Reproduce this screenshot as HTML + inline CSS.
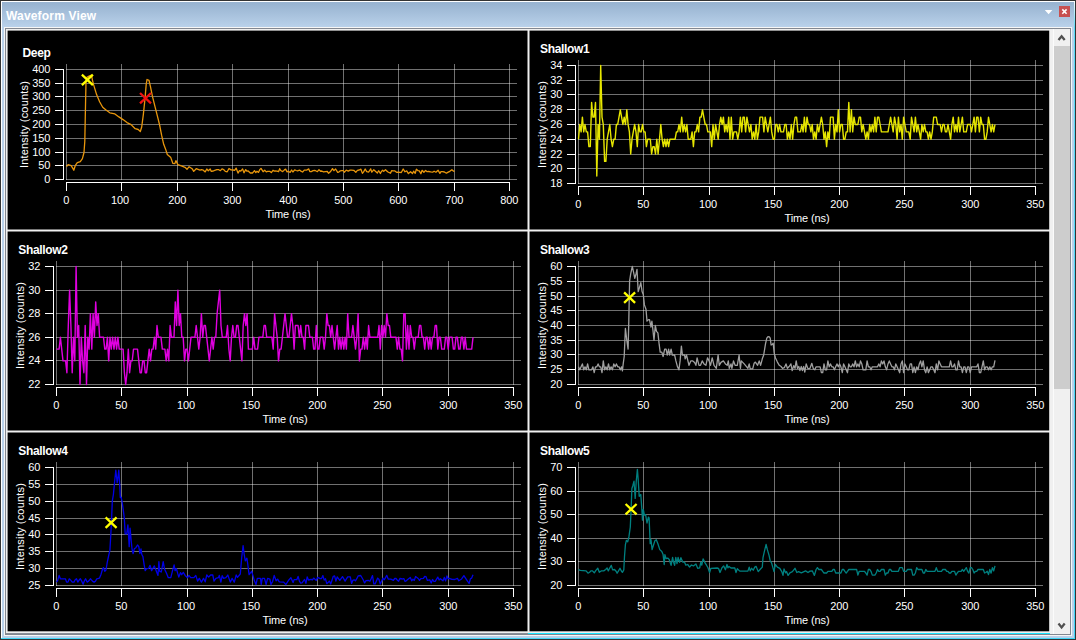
<!DOCTYPE html>
<html><head><meta charset="utf-8"><title>Waveform View</title>
<style>
html,body{margin:0;padding:0;}
body{width:1076px;height:640px;overflow:hidden;position:relative;background:#333;font-family:"Liberation Sans",sans-serif;}
.abs{position:absolute;}
#win{left:1px;top:1px;width:1074px;height:638px;background:linear-gradient(#99b4d1 0px,#99b4d1 3px,#b9d1ea 26px,#b9d1ea 100%);}
#hl-top{left:1px;top:1px;width:1074px;height:1px;background:#fff;}
#hl-left{left:1px;top:1px;width:1px;height:638px;background:#fff;}
#cy-right{left:1074px;top:2px;width:1px;height:637px;background:linear-gradient(#f4fbff 0px,#5adcf6 26px,#3fd6f7 100%);}
#cy-bot{left:1px;top:638px;width:1074px;height:1px;background:#3fd6f7;}
#title{left:6px;top:9px;color:#fff;font-weight:bold;font-size:12px;line-height:14px;letter-spacing:0.18px;white-space:nowrap;}
#dd{left:1045px;top:10px;width:0;height:0;border-left:3.6px solid transparent;border-right:3.6px solid transparent;border-top:4.4px solid #fff;}
#close{left:1059px;top:6px;width:11px;height:11px;background:#c75050;}
#frame-w{left:4px;top:27px;width:1068px;height:609px;background:#f6f6f6;}
#wl{left:1053px;top:29px;width:1px;height:605px;background:#fbfbfb;}
#frame-g{left:5px;top:28px;width:1066px;height:607px;background:#828790;}
#frame-in{left:6px;top:29px;width:1064px;height:605px;background:#f0f0f0;}
#cy-in{left:528px;top:633px;width:522px;height:1px;background:#19e6ff;}
#gr-in{left:6px;top:633px;width:522px;height:1px;background:#8a8f98;}
#sb{left:1054px;top:29px;width:16px;height:605px;background:#f0f0f0;}
#thumb{left:1054px;top:46px;width:16px;height:343px;background:#cdcdcd;}
.panel{background:#000;border:1px solid #e3e3e3;box-sizing:border-box;}
.panel-svg{position:absolute;overflow:hidden;}
text{font-family:"Liberation Sans",sans-serif;fill:#fff;}
.ttl{font-weight:bold;font-size:12px;letter-spacing:-0.35px;}
.tk{font-size:11px;letter-spacing:-0.1px;}
</style></head><body>
<div id="win" class="abs"></div>
<div id="hl-top" class="abs"></div><div id="hl-left" class="abs"></div>
<div id="cy-right" class="abs"></div><div id="cy-bot" class="abs"></div>
<div id="title" class="abs">Waveform View</div>
<svg class="abs" style="left:1040px;top:5px" width="16" height="14" viewBox="1040 5 16 14"><path d="M1044.8 9.9H1052.4L1048.6 14.3Z" fill="#fff"/></svg>
<div id="close" class="abs"><svg width="11" height="11" viewBox="0 0 11 11" style="display:block"><path d="M3.3 3.4L7.6 7.7M7.6 3.4L3.3 7.7" stroke="#fff" stroke-width="1.6" fill="none"/></svg></div>
<div id="frame-w" class="abs"></div><div id="frame-g" class="abs"></div><div id="frame-in" class="abs"></div>
<div id="gr-in" class="abs"></div><div id="cy-in" class="abs"></div>
<div id="sb" class="abs"></div><div id="wl" class="abs"></div><div id="thumb" class="abs"></div>
<svg class="abs" style="left:1054px;top:29px" width="16" height="605" viewBox="0 0 16 605"><path d="M4.5 11L7.6 7.2L10.7 11M4.5 594.6L7.6 598.4L10.7 594.6" stroke="#505050" stroke-width="2.3" fill="none"/></svg>
<svg class="abs" style="left:0;top:0" width="1076" height="640" viewBox="0 0 1076 640">
<g fill="#000">
<rect x="7.6" y="30.6" width="519.9" height="198.9"/><rect x="529.5" y="30.6" width="519.7" height="198.9"/>
<rect x="7.6" y="231.5" width="519.9" height="199"/><rect x="529.5" y="231.5" width="519.7" height="199"/>
<rect x="7.6" y="432.5" width="519.9" height="198.8"/><rect x="529.5" y="432.5" width="519.7" height="198.8"/>
</g></svg>
<svg class="panel-svg" style="left:7px;top:30px" width="521" height="201" viewBox="7 30 521 201">
<path d="M66.5 64V180M121.5 64V180M177.5 64V180M232.5 64V180M288.5 64V180M343.5 64V180M398.5 64V180M454.5 64V180M509.5 64V180" stroke="#fff" stroke-opacity="0.44" stroke-width="1" fill="none"/>
<path d="M66 179.5H517M66 165.5H517M66 152.5H517M66 138.5H517M66 124.5H517M66 110.5H517M66 96.5H517M66 83.5H517M66 69.5H517" stroke="#fff" stroke-opacity="0.44" stroke-width="1" fill="none"/>
<path d="M63.5 69V180M55 179.5H64M55 165.5H64M55 152.5H64M55 138.5H64M55 124.5H64M55 110.5H64M55 96.5H64M55 83.5H64M55 69.5H64M66 182.5H510M66.5 182V191M121.5 182V191M177.5 182V191M232.5 182V191M288.5 182V191M343.5 182V191M398.5 182V191M454.5 182V191M509.5 182V191" stroke="#fff" stroke-width="1" fill="none"/>
<path d="M66.5 166.7 L68.1 164.7 L71.2 165.7 L73.8 170.2 L75.2 165.7 L77.3 162.6 L80.3 161.6 L82.4 158.6 L84 152.5 L84.8 141.3 L85.2 121 L85.6 100.6 L86 82.4 L86.8 77.3 L89.5 75.9 L91.5 75.2 L92.5 80.3 L93.5 84.4 L96.6 94.6 L99.6 101.7 L102.7 107.2 L105.7 109.8 L109.8 112.8 L114.9 113.9 L118.9 116.9 L123 119.6 L127 122.6 L131.1 124.6 L135.2 128.7 L138.2 129.5 L140.3 131.5 L141.7 127 L143.3 114.9 L145 98.6 L146.2 84.4 L147 79.5 L149 80.3 L150.4 86.4 L152.5 96.6 L154.5 104.7 L157.6 116.9 L159.6 125 L161.6 135.2 L163.7 144.3 L165.7 149.4 L167.3 154.5 L170.8 157.6 L172.8 163.3 L174.8 163.7 L175.9 160.6 L177.9 164.7 L182 166.1 L185 167.3 L187 169.3 L189.1 166.7 L192.1 168.7 L193.7 171.4 L196.2 168.7 L200 170.2 L201.5 169.6 L203.3 170.2 L205.2 171.9 L206.8 169 L208.3 170.8 L210.2 169 L211.3 171.4 L213.3 171 L214.7 170.4 L216.9 169.7 L218.8 169.7 L220.4 170.7 L222 168.8 L224 169.9 L225.3 171.4 L227.2 171.8 L229 168.5 L231 169.9 L233.1 170 L234.6 170.3 L236.1 168.1 L238 173.1 L239.5 170.6 L240.8 171.1 L242.6 168.9 L244 172.8 L245.7 169.6 L246.8 171.2 L248.2 171 L250.3 173 L252.5 173 L254.5 170.6 L255.8 172.6 L256.9 171.3 L258.5 172.4 L259.8 169.6 L261 168.4 L263.1 171.7 L264.7 170.2 L266.3 171.9 L267.6 171.4 L269.6 171.3 L271.3 172.6 L273 170.3 L274 171.1 L275 171 L277 171.2 L278.5 171.7 L279.7 168.7 L280.7 170.5 L282.7 171.6 L284.4 169.9 L285.6 169.1 L287.1 171.9 L288.2 171.3 L290.1 172.4 L291.6 170 L292.9 172 L294.7 169.9 L296.2 170.5 L297.5 170.9 L299.6 170.1 L301.3 171.4 L302.6 172 L304.3 170.1 L306.5 170.2 L308.7 168.9 L309.8 171.6 L311.3 171.6 L313.1 170.7 L314.5 170.5 L315.6 170.7 L317.4 171.7 L319 169.7 L320.6 171.3 L321.7 171 L323.5 171.9 L325.3 171.6 L327.3 171.5 L328.6 173.3 L330.3 171.8 L332.5 168.6 L333.9 170.6 L335.6 169 L337.7 172.4 L338.8 172.1 L340.1 170.9 L341.9 170.7 L343.3 170.7 L344.5 172.2 L346.2 170.1 L348.3 171.1 L350.1 170.1 L351.5 170.1 L353.7 170.3 L355.8 172.3 L357.4 170.4 L359.2 170 L360.9 169.2 L362.4 173.4 L363.6 171.9 L365.2 169 L366.7 171.6 L368.7 172 L370.7 168.9 L371.8 172.2 L373.7 169.8 L375.7 171.6 L377.3 173 L378.6 170.7 L380.4 173.5 L381.4 171.5 L382.7 170.3 L383.7 171.4 L385.5 169.7 L387.6 171.7 L389.4 172.7 L390.5 173.2 L391.6 170.7 L393.3 170.9 L394.9 170.9 L396.9 172.4 L398.2 172.1 L399.8 172.4 L401.3 172.5 L403.2 169 L405 171.8 L406.7 170.9 L408.4 173.6 L410.6 171.7 L412.5 173.6 L413.6 171.2 L415.2 173.3 L416.4 169.2 L418.1 170.7 L419.3 170.9 L420.9 173.7 L422.1 170.3 L423.9 172.3 L425.6 170.4 L427.1 171.7 L428.7 171.5 L430.7 171.9 L432.6 172.2 L434.1 171.2 L435.9 172.2 L438.1 170.2 L439.9 173.4 L441 171.6 L442.6 171.6 L444.4 172 L446.4 173.2 L447.7 172.4 L449.8 171.3 L451.9 169.7 L453.6 171.2 L454.5 171.5" stroke="#e8960c" stroke-width="1.3" fill="none" stroke-linejoin="round"/>
<path d="M81.9 74.7L92.9 85.1M81.9 85.1L92.9 74.7" stroke="#ffff00" stroke-width="2.3" fill="none"/>
<path d="M140 93L151 103.4M140 103.4L151 93" stroke="#f01010" stroke-width="2.3" fill="none"/>
<text class="ttl" x="22.5" y="57">Deep</text>
<text class="tk" text-anchor="end" x="50.2" y="183.1">0</text>
<text class="tk" text-anchor="end" x="50.2" y="169.1">50</text>
<text class="tk" text-anchor="end" x="50.2" y="156.1">100</text>
<text class="tk" text-anchor="end" x="50.2" y="142.1">150</text>
<text class="tk" text-anchor="end" x="50.2" y="128.1">200</text>
<text class="tk" text-anchor="end" x="50.2" y="114.1">250</text>
<text class="tk" text-anchor="end" x="50.2" y="100.1">300</text>
<text class="tk" text-anchor="end" x="50.2" y="87.1">350</text>
<text class="tk" text-anchor="end" x="50.2" y="73.1">400</text>
<text class="tk" text-anchor="middle" x="66.2" y="204.1">0</text>
<text class="tk" text-anchor="middle" x="120.1" y="204.1">100</text>
<text class="tk" text-anchor="middle" x="177.2" y="204.1">200</text>
<text class="tk" text-anchor="middle" x="232.2" y="204.1">300</text>
<text class="tk" text-anchor="middle" x="288.2" y="204.1">400</text>
<text class="tk" text-anchor="middle" x="343.2" y="204.1">500</text>
<text class="tk" text-anchor="middle" x="398.2" y="204.1">600</text>
<text class="tk" text-anchor="middle" x="454.2" y="204.1">700</text>
<text class="tk" text-anchor="middle" x="509.2" y="204.1">800</text>
<text class="tk" text-anchor="middle" x="288" y="217.9">Time (ns)</text>
<text class="tk" text-anchor="middle" transform="translate(27.5 124.5) rotate(-90)" style="letter-spacing:0.18px">Intensity (counts)</text>
</svg>
<svg class="panel-svg" style="left:528px;top:30px" width="522" height="201" viewBox="528 30 522 201">
<path d="M578.5 60V184M643.5 60V184M709.5 60V184M774.5 60V184M839.5 60V184M904.5 60V184M970.5 60V184M1035.5 60V184" stroke="#fff" stroke-opacity="0.44" stroke-width="1" fill="none"/>
<path d="M578 183.5H1043M578 168.5H1043M578 154.5H1043M578 139.5H1043M578 124.5H1043M578 109.5H1043M578 94.5H1043M578 80.5H1043M578 65.5H1043" stroke="#fff" stroke-opacity="0.44" stroke-width="1" fill="none"/>
<path d="M575.5 65V184M567 183.5H576M567 168.5H576M567 154.5H576M567 139.5H576M567 124.5H576M567 109.5H576M567 94.5H576M567 80.5H576M567 65.5H576M578 186.5H1036M578.5 186V195M643.5 186V195M709.5 186V195M774.5 186V195M839.5 186V195M904.5 186V195M970.5 186V195M1035.5 186V195" stroke="#fff" stroke-width="1" fill="none"/>
<path d="M578.5 139.2 L579.8 124.5 L581.1 131.9 L582.4 117.1 L583.7 131.9 L585 124.5 L586.3 131.9 L587.6 131.9 L588.9 146.6 L590.3 146.6 L591.6 102.4 L592.9 117.1 L594.2 117.1 L595.5 102.4 L596.8 176.1 L598.1 124.5 L599.4 139.2 L600.7 65.5 L602 117.1 L603.3 124.5 L604.6 161.4 L605.9 161.4 L607.2 139.2 L608.5 131.9 L609.8 124.5 L611.1 139.2 L612.4 146.6 L613.8 139.2 L615.1 139.2 L616.4 124.5 L617.7 124.5 L619 117.1 L620.3 109.8 L621.6 117.1 L622.9 124.5 L624.2 117.1 L625.5 124.5 L626.8 109.8 L628.1 124.5 L629.4 131.9 L630.7 154 L632 139.2 L633.3 131.9 L634.6 124.5 L636 131.9 L637.3 146.6 L638.6 124.5 L639.9 131.9 L641.2 131.9 L642.5 124.5 L643.8 131.9 L645.1 131.9 L646.4 146.6 L647.7 139.2 L649 139.2 L650.3 139.2 L651.6 154 L652.9 146.6 L654.2 146.6 L655.5 154 L656.8 139.2 L658.1 154 L659.5 139.2 L660.8 124.5 L662.1 139.2 L663.4 146.6 L664.7 139.2 L666 146.6 L667.3 139.2 L668.6 146.6 L669.9 139.2 L671.2 139.2 L672.5 139.2 L673.8 139.2 L675.1 139.2 L676.4 131.9 L677.7 131.9 L679 124.5 L680.3 131.9 L681.7 117.1 L683 131.9 L684.3 124.5 L685.6 131.9 L686.9 124.5 L688.2 139.2 L689.5 139.2 L690.8 139.2 L692.1 131.9 L693.4 146.6 L694.7 131.9 L696 131.9 L697.3 124.5 L698.6 131.9 L699.9 117.1 L701.2 117.1 L702.5 109.8 L703.8 117.1 L705.2 124.5 L706.5 124.5 L707.8 131.9 L709.1 131.9 L710.4 131.9 L711.7 146.6 L713 124.5 L714.3 139.2 L715.6 124.5 L716.9 131.9 L718.2 139.2 L719.5 124.5 L720.8 117.1 L722.1 124.5 L723.4 117.1 L724.7 131.9 L726 124.5 L727.4 131.9 L728.7 117.1 L730 139.2 L731.3 117.1 L732.6 139.2 L733.9 131.9 L735.2 131.9 L736.5 131.9 L737.8 139.2 L739.1 131.9 L740.4 117.1 L741.7 131.9 L743 117.1 L744.3 117.1 L745.6 131.9 L746.9 117.1 L748.2 124.5 L749.5 131.9 L750.9 124.5 L752.2 139.2 L753.5 131.9 L754.8 139.2 L756.1 124.5 L757.4 139.2 L758.7 131.9 L760 117.1 L761.3 117.1 L762.6 117.1 L763.9 131.9 L765.2 117.1 L766.5 124.5 L767.8 131.9 L769.1 124.5 L770.4 117.1 L771.7 131.9 L773.1 139.2 L774.4 139.2 L775.7 124.5 L777 124.5 L778.3 131.9 L779.6 124.5 L780.9 131.9 L782.2 131.9 L783.5 131.9 L784.8 124.5 L786.1 124.5 L787.4 139.2 L788.7 131.9 L790 139.2 L791.3 124.5 L792.6 139.2 L793.9 124.5 L795.2 117.1 L796.6 117.1 L797.9 131.9 L799.2 131.9 L800.5 131.9 L801.8 124.5 L803.1 131.9 L804.4 117.1 L805.7 131.9 L807 117.1 L808.3 124.5 L809.6 124.5 L810.9 131.9 L812.2 124.5 L813.5 139.2 L814.8 131.9 L816.1 139.2 L817.4 124.5 L818.8 131.9 L820.1 124.5 L821.4 117.1 L822.7 124.5 L824 139.2 L825.3 131.9 L826.6 146.6 L827.9 131.9 L829.2 139.2 L830.5 117.1 L831.8 117.1 L833.1 117.1 L834.4 139.2 L835.7 124.5 L837 131.9 L838.3 109.8 L839.6 131.9 L840.9 124.5 L842.3 124.5 L843.6 139.2 L844.9 139.2 L846.2 131.9 L847.5 131.9 L848.8 102.4 L850.1 131.9 L851.4 109.8 L852.7 131.9 L854 117.1 L855.3 124.5 L856.6 124.5 L857.9 124.5 L859.2 117.1 L860.5 117.1 L861.8 131.9 L863.1 124.5 L864.5 131.9 L865.8 139.2 L867.1 131.9 L868.4 139.2 L869.7 124.5 L871 131.9 L872.3 124.5 L873.6 131.9 L874.9 117.1 L876.2 131.9 L877.5 117.1 L878.8 117.1 L880.1 124.5 L881.4 131.9 L882.7 131.9 L884 131.9 L885.3 131.9 L886.6 131.9 L888 131.9 L889.3 124.5 L890.6 117.1 L891.9 124.5 L893.2 131.9 L894.5 117.1 L895.8 124.5 L897.1 139.2 L898.4 117.1 L899.7 131.9 L901 124.5 L902.3 139.2 L903.6 117.1 L904.9 124.5 L906.2 131.9 L907.5 131.9 L908.8 131.9 L910.2 139.2 L911.5 117.1 L912.8 124.5 L914.1 131.9 L915.4 117.1 L916.7 131.9 L918 124.5 L919.3 131.9 L920.6 139.2 L921.9 124.5 L923.2 131.9 L924.5 124.5 L925.8 131.9 L927.1 131.9 L928.4 139.2 L929.7 131.9 L931 139.2 L932.3 131.9 L933.7 117.1 L935 117.1 L936.3 117.1 L937.6 124.5 L938.9 124.5 L940.2 124.5 L941.5 131.9 L942.8 124.5 L944.1 124.5 L945.4 131.9 L946.7 131.9 L948 124.5 L949.3 131.9 L950.6 139.2 L951.9 124.5 L953.2 117.1 L954.5 131.9 L955.9 124.5 L957.2 131.9 L958.5 117.1 L959.8 131.9 L961.1 124.5 L962.4 117.1 L963.7 131.9 L965 131.9 L966.3 131.9 L967.6 124.5 L968.9 124.5 L970.2 124.5 L971.5 131.9 L972.8 124.5 L974.1 117.1 L975.4 131.9 L976.7 117.1 L978 117.1 L979.4 131.9 L980.7 117.1 L982 124.5 L983.3 124.5 L984.6 139.2 L985.9 139.2 L987.2 131.9 L988.5 117.1 L989.8 124.5 L991.1 131.9 L992.4 124.5 L993.7 131.9 L995 124.5" stroke="#e6e600" stroke-width="1.4" fill="none" stroke-linejoin="round"/>
<text class="ttl" x="540" y="53">Shallow1</text>
<text class="tk" text-anchor="end" x="562.2" y="187.1">18</text>
<text class="tk" text-anchor="end" x="562.2" y="172.1">20</text>
<text class="tk" text-anchor="end" x="562.2" y="158.1">22</text>
<text class="tk" text-anchor="end" x="562.2" y="143.1">24</text>
<text class="tk" text-anchor="end" x="562.2" y="128.1">26</text>
<text class="tk" text-anchor="end" x="562.2" y="113.1">28</text>
<text class="tk" text-anchor="end" x="562.2" y="98.1">30</text>
<text class="tk" text-anchor="end" x="562.2" y="84.1">32</text>
<text class="tk" text-anchor="end" x="562.2" y="69.1">34</text>
<text class="tk" text-anchor="middle" x="578.2" y="208.1">0</text>
<text class="tk" text-anchor="middle" x="643.2" y="208.1">50</text>
<text class="tk" text-anchor="middle" x="708.1" y="208.1">100</text>
<text class="tk" text-anchor="middle" x="773.1" y="208.1">150</text>
<text class="tk" text-anchor="middle" x="839.2" y="208.1">200</text>
<text class="tk" text-anchor="middle" x="904.2" y="208.1">250</text>
<text class="tk" text-anchor="middle" x="970.2" y="208.1">300</text>
<text class="tk" text-anchor="middle" x="1035.2" y="208.1">350</text>
<text class="tk" text-anchor="middle" x="807" y="221.9">Time (ns)</text>
<text class="tk" text-anchor="middle" transform="translate(546.1 124.5) rotate(-90)" style="letter-spacing:0.18px">Intensity (counts)</text>
</svg>
<svg class="panel-svg" style="left:7px;top:231px" width="521" height="201" viewBox="7 231 521 201">
<path d="M56.5 261V385M121.5 261V385M187.5 261V385M252.5 261V385M317.5 261V385M382.5 261V385M448.5 261V385M513.5 261V385" stroke="#fff" stroke-opacity="0.44" stroke-width="1" fill="none"/>
<path d="M56 384.5H521M56 360.5H521M56 337.5H521M56 313.5H521M56 290.5H521M56 266.5H521" stroke="#fff" stroke-opacity="0.44" stroke-width="1" fill="none"/>
<path d="M53.5 266V385M45 384.5H54M45 360.5H54M45 337.5H54M45 313.5H54M45 290.5H54M45 266.5H54M56 387.5H514M56.5 387V396M121.5 387V396M187.5 387V396M252.5 387V396M317.5 387V396M382.5 387V396M448.5 387V396M513.5 387V396" stroke="#fff" stroke-width="1" fill="none"/>
<path d="M56.5 349.1 L57.8 349.1 L59.1 349.1 L60.4 337.3 L61.7 349.1 L63 360.9 L64.3 360.9 L65.6 360.9 L66.9 372.7 L68.3 325.5 L69.6 290.1 L70.9 325.5 L72.2 372.7 L73.5 337.3 L74.8 360.9 L76.1 266.5 L77.4 337.3 L78.7 325.5 L80 384.5 L81.3 337.3 L82.6 360.9 L83.9 372.7 L85.2 325.5 L86.5 384.5 L87.8 337.3 L89.1 349.1 L90.4 313.7 L91.8 349.1 L93.1 313.7 L94.4 337.3 L95.7 301.9 L97 325.5 L98.3 313.7 L99.6 337.3 L100.9 337.3 L102.2 337.3 L103.5 337.3 L104.8 349.1 L106.1 349.1 L107.4 337.3 L108.7 360.9 L110 337.3 L111.3 349.1 L112.6 337.3 L114 349.1 L115.3 337.3 L116.6 349.1 L117.9 337.3 L119.2 349.1 L120.5 349.1 L121.8 349.1 L123.1 349.1 L124.4 372.7 L125.7 384.5 L127 372.7 L128.3 349.1 L129.6 372.7 L130.9 360.9 L132.2 360.9 L133.5 349.1 L134.8 349.1 L136.1 349.1 L137.5 349.1 L138.8 360.9 L140.1 372.7 L141.4 372.7 L142.7 360.9 L144 360.9 L145.3 372.7 L146.6 372.7 L147.9 360.9 L149.2 349.1 L150.5 360.9 L151.8 349.1 L153.1 349.1 L154.4 337.3 L155.7 349.1 L157 325.5 L158.3 337.3 L159.7 337.3 L161 337.3 L162.3 349.1 L163.6 349.1 L164.9 349.1 L166.2 360.9 L167.5 349.1 L168.8 360.9 L170.1 325.5 L171.4 337.3 L172.7 337.3 L174 337.3 L175.3 301.9 L176.6 325.5 L177.9 290.1 L179.2 325.5 L180.5 313.7 L181.8 337.3 L183.2 337.3 L184.5 360.9 L185.8 349.1 L187.1 349.1 L188.4 360.9 L189.7 349.1 L191 337.3 L192.3 337.3 L193.6 337.3 L194.9 337.3 L196.2 325.5 L197.5 337.3 L198.8 349.1 L200.1 337.3 L201.4 313.7 L202.7 337.3 L204 325.5 L205.4 325.5 L206.7 337.3 L208 349.1 L209.3 360.9 L210.6 349.1 L211.9 337.3 L213.2 349.1 L214.5 337.3 L215.8 337.3 L217.1 313.7 L218.4 301.9 L219.7 290.1 L221 325.5 L222.3 337.3 L223.6 337.3 L224.9 337.3 L226.2 337.3 L227.5 325.5 L228.9 349.1 L230.2 360.9 L231.5 337.3 L232.8 325.5 L234.1 337.3 L235.4 337.3 L236.7 325.5 L238 325.5 L239.3 337.3 L240.6 349.1 L241.9 360.9 L243.2 325.5 L244.5 313.7 L245.8 325.5 L247.1 313.7 L248.4 349.1 L249.7 349.1 L251.1 349.1 L252.4 349.1 L253.7 337.3 L255 349.1 L256.3 349.1 L257.6 349.1 L258.9 337.3 L260.2 337.3 L261.5 337.3 L262.8 337.3 L264.1 325.5 L265.4 325.5 L266.7 337.3 L268 337.3 L269.3 337.3 L270.6 337.3 L271.9 337.3 L273.2 349.1 L274.6 313.7 L275.9 325.5 L277.2 337.3 L278.5 360.9 L279.8 349.1 L281.1 349.1 L282.4 337.3 L283.7 325.5 L285 313.7 L286.3 325.5 L287.6 337.3 L288.9 337.3 L290.2 325.5 L291.5 313.7 L292.8 325.5 L294.1 349.1 L295.4 325.5 L296.8 325.5 L298.1 325.5 L299.4 337.3 L300.7 325.5 L302 337.3 L303.3 337.3 L304.6 349.1 L305.9 325.5 L307.2 325.5 L308.5 325.5 L309.8 337.3 L311.1 337.3 L312.4 337.3 L313.7 349.1 L315 349.1 L316.3 325.5 L317.6 349.1 L318.9 349.1 L320.3 337.3 L321.6 337.3 L322.9 337.3 L324.2 349.1 L325.5 337.3 L326.8 313.7 L328.1 325.5 L329.4 325.5 L330.7 337.3 L332 325.5 L333.3 337.3 L334.6 349.1 L335.9 337.3 L337.2 325.5 L338.5 349.1 L339.8 337.3 L341.1 349.1 L342.5 337.3 L343.8 349.1 L345.1 337.3 L346.4 349.1 L347.7 313.7 L349 337.3 L350.3 337.3 L351.6 337.3 L352.9 325.5 L354.2 337.3 L355.5 349.1 L356.8 337.3 L358.1 313.7 L359.4 360.9 L360.7 349.1 L362 349.1 L363.3 337.3 L364.6 349.1 L366 337.3 L367.3 349.1 L368.6 325.5 L369.9 337.3 L371.2 337.3 L372.5 337.3 L373.8 337.3 L375.1 337.3 L376.4 337.3 L377.7 337.3 L379 325.5 L380.3 349.1 L381.6 325.5 L382.9 337.3 L384.2 325.5 L385.5 337.3 L386.8 313.7 L388.2 325.5 L389.5 325.5 L390.8 337.3 L392.1 337.3 L393.4 337.3 L394.7 337.3 L396 337.3 L397.3 349.1 L398.6 337.3 L399.9 349.1 L401.2 349.1 L402.5 360.9 L403.8 313.7 L405.1 313.7 L406.4 349.1 L407.7 325.5 L409 349.1 L410.3 325.5 L411.7 337.3 L413 337.3 L414.3 349.1 L415.6 337.3 L416.9 337.3 L418.2 337.3 L419.5 325.5 L420.8 325.5 L422.1 337.3 L423.4 337.3 L424.7 349.1 L426 337.3 L427.3 337.3 L428.6 349.1 L429.9 337.3 L431.2 349.1 L432.5 337.3 L433.9 337.3 L435.2 325.5 L436.5 325.5 L437.8 349.1 L439.1 337.3 L440.4 337.3 L441.7 349.1 L443 349.1 L444.3 349.1 L445.6 337.3 L446.9 337.3 L448.2 349.1 L449.5 337.3 L450.8 337.3 L452.1 337.3 L453.4 349.1 L454.7 349.1 L456 337.3 L457.4 337.3 L458.7 349.1 L460 349.1 L461.3 337.3 L462.6 337.3 L463.9 349.1 L465.2 337.3 L466.5 349.1 L467.8 349.1 L469.1 349.1 L470.4 349.1 L471.7 349.1 L473 337.3" stroke="#e000e0" stroke-width="1.4" fill="none" stroke-linejoin="round"/>
<text class="ttl" x="18.3" y="254">Shallow2</text>
<text class="tk" text-anchor="end" x="40.2" y="388.1">22</text>
<text class="tk" text-anchor="end" x="40.2" y="364.1">24</text>
<text class="tk" text-anchor="end" x="40.2" y="341.1">26</text>
<text class="tk" text-anchor="end" x="40.2" y="317.1">28</text>
<text class="tk" text-anchor="end" x="40.2" y="294.1">30</text>
<text class="tk" text-anchor="end" x="40.2" y="270.1">32</text>
<text class="tk" text-anchor="middle" x="56.2" y="409.1">0</text>
<text class="tk" text-anchor="middle" x="121.2" y="409.1">50</text>
<text class="tk" text-anchor="middle" x="186.1" y="409.1">100</text>
<text class="tk" text-anchor="middle" x="251.1" y="409.1">150</text>
<text class="tk" text-anchor="middle" x="317.2" y="409.1">200</text>
<text class="tk" text-anchor="middle" x="382.2" y="409.1">250</text>
<text class="tk" text-anchor="middle" x="448.2" y="409.1">300</text>
<text class="tk" text-anchor="middle" x="513.2" y="409.1">350</text>
<text class="tk" text-anchor="middle" x="285" y="422.9">Time (ns)</text>
<text class="tk" text-anchor="middle" transform="translate(23.6 325.5) rotate(-90)" style="letter-spacing:0.18px">Intensity (counts)</text>
</svg>
<svg class="panel-svg" style="left:528px;top:231px" width="522" height="201" viewBox="528 231 522 201">
<path d="M578.5 261V385M643.5 261V385M709.5 261V385M774.5 261V385M839.5 261V385M904.5 261V385M970.5 261V385M1035.5 261V385" stroke="#fff" stroke-opacity="0.44" stroke-width="1" fill="none"/>
<path d="M578 384.5H1043M578 369.5H1043M578 354.5H1043M578 340.5H1043M578 325.5H1043M578 310.5H1043M578 296.5H1043M578 281.5H1043M578 266.5H1043" stroke="#fff" stroke-opacity="0.44" stroke-width="1" fill="none"/>
<path d="M575.5 266V385M567 384.5H576M567 369.5H576M567 354.5H576M567 340.5H576M567 325.5H576M567 310.5H576M567 296.5H576M567 281.5H576M567 266.5H576M578 387.5H1036M578.5 387V396M643.5 387V396M709.5 387V396M774.5 387V396M839.5 387V396M904.5 387V396M970.5 387V396M1035.5 387V396" stroke="#fff" stroke-width="1" fill="none"/>
<path d="M578.5 366.8 L579.8 369.8 L581.1 366.8 L582.4 363.9 L583.7 369.8 L585 366.8 L586.3 369.8 L587.6 363.9 L588.9 369.8 L590.3 369.8 L591.6 369.8 L592.9 366.8 L594.2 372.7 L595.5 366.8 L596.8 366.8 L598.1 363.9 L599.4 366.8 L600.7 366.8 L602 372.7 L603.3 360.9 L604.6 369.8 L605.9 366.8 L607.2 369.8 L608.5 363.9 L609.8 369.8 L611.1 366.8 L612.4 369.8 L613.8 363.9 L615.1 366.8 L616.4 363.9 L617.7 366.8 L619 366.8 L620.3 369.8 L621.6 366.8 L622.4 370.9 L623.2 363.9 L624.2 356.5 L625.4 328.4 L626.8 340.2 L628.1 349.1 L628.8 321.1 L629.6 281.2 L630.7 273.9 L632.3 266.5 L633.6 272.4 L634.8 278.3 L636 273.9 L637 269.4 L638.2 291.6 L639.6 287.1 L640.8 282.7 L642.1 291.6 L643.3 294.5 L644.4 304.9 L646 309.3 L647 321.1 L648.6 319.6 L649.5 319.6 L651 327 L651.9 321.1 L652.9 329.9 L654 340.2 L655.3 325.5 L656.5 331.4 L657.9 332.9 L659.2 344.7 L660.2 352.1 L661.8 352.1 L663.1 356.5 L664.7 349.1 L666.1 349.1 L667.3 355 L668.6 349.1 L669.6 355 L671.1 349.1 L672.3 355 L674.6 355 L675.9 360.9 L677.5 366.8 L678.9 369.8 L680.1 360.9 L681.4 346.1 L682.4 355 L684.5 355 L685.2 358.8 L686.5 355 L689 365.3 L690.8 360.9 L692.8 360.9 L694.6 362.4 L695.9 365.3 L697.1 357.9 L699 365.3 L700.5 365.3 L702.2 360.9 L704 363.9 L705.9 365.3 L707.5 357.9 L709.1 360.9 L710.5 365.3 L712.2 357.9 L714 365.3 L716.3 368.3 L718.1 355 L719.3 365.3 L721 362.4 L723.4 360.9 L725.4 363.9 L727.2 365.3 L728.3 360.9 L729.3 368.3 L731 363.9 L731.9 368.3 L733.5 360.9 L735.1 365.3 L737.3 365.3 L739.1 355 L740.4 368.3 L741.3 360.9 L744.2 363.9 L747.9 368.3 L749.2 363.9 L750.2 368.9 L752.7 368.9 L754.1 363.3 L755.4 362.1 L757.6 365.3 L759.2 360.9 L760.6 365.3 L762.3 358.8 L763.7 355 L765.5 343.8 L766.8 338.2 L768 336.7 L769.5 337 L770.2 338.2 L771.1 345 L772.4 344.4 L773.2 343.2 L774.2 353.2 L775.5 357.9 L777.4 362.1 L779.3 365.3 L781.1 366.5 L782.5 368.3 L784.3 367.7 L786 363.9 L787.4 368.3 L789.2 366.5 L790.9 363.9 L792.2 370.6 L793.7 365.6 L795 368.3 L796.2 360.9 L797.5 368.3 L798.8 366.5 L799.9 370.6 L801.3 366.5 L802.4 370.6 L803.7 366.5 L804.8 372.1 L806.2 363.9 L808 368.9 L810 368.3 L811.8 363.3 L813.4 368.9 L814.8 369.8 L816.1 366.8 L817.4 366.8 L818.8 366.8 L820.1 366.8 L821.4 372.7 L822.7 372.7 L824 363.9 L825.3 369.8 L826.6 369.8 L827.9 360.9 L829.2 366.8 L830.5 363.9 L831.8 366.8 L833.1 366.8 L834.4 369.8 L835.7 366.8 L837 363.9 L838.3 366.8 L839.6 363.9 L840.9 366.8 L842.3 372.7 L843.6 363.9 L844.9 366.8 L846.2 369.8 L847.5 372.7 L848.8 363.9 L850.1 366.8 L851.4 366.8 L852.7 363.9 L854 366.8 L855.3 360.9 L856.6 366.8 L857.9 363.9 L859.2 366.8 L860.5 360.9 L861.8 363.9 L863.1 369.8 L864.5 369.8 L865.8 369.8 L867.1 360.9 L868.4 366.8 L869.7 366.8 L871 369.8 L872.3 366.8 L873.6 366.8 L874.9 366.8 L876.2 366.8 L877.5 366.8 L878.8 363.9 L880.1 366.8 L881.4 360.9 L882.7 363.9 L884 360.9 L885.3 366.8 L886.6 369.8 L888 363.9 L889.3 360.9 L890.6 363.9 L891.9 366.8 L893.2 366.8 L894.5 369.8 L895.8 363.9 L897.1 366.8 L898.4 369.8 L899.7 372.7 L901 363.9 L902.3 360.9 L903.6 372.7 L904.9 363.9 L906.2 366.8 L907.5 369.8 L908.8 369.8 L910.2 363.9 L911.5 363.9 L912.8 372.7 L914.1 366.8 L915.4 372.7 L916.7 366.8 L918 369.8 L919.3 363.9 L920.6 360.9 L921.9 366.8 L923.2 360.9 L924.5 369.8 L925.8 372.7 L927.1 366.8 L928.4 372.7 L929.7 369.8 L931 366.8 L932.3 366.8 L933.7 369.8 L935 372.7 L936.3 363.9 L937.6 369.8 L938.9 360.9 L940.2 363.9 L941.5 366.8 L942.8 366.8 L944.1 366.8 L945.4 366.8 L946.7 366.8 L948 366.8 L949.3 366.8 L950.6 360.9 L951.9 366.8 L953.2 366.8 L954.5 363.9 L955.9 369.8 L957.2 369.8 L958.5 360.9 L959.8 366.8 L961.1 366.8 L962.4 372.7 L963.7 366.8 L965 366.8 L966.3 372.7 L967.6 366.8 L968.9 366.8 L970.2 372.7 L971.5 366.8 L972.8 366.8 L974.1 366.8 L975.4 366.8 L976.7 366.8 L978 363.9 L979.4 372.7 L980.7 372.7 L982 366.8 L983.3 360.9 L984.6 369.8 L985.9 366.8 L987.2 366.8 L988.5 369.8 L989.8 366.8 L991.1 369.8 L992.4 366.8 L993.7 366.8 L995 360.3" stroke="#a0a0a0" stroke-width="1.3" fill="none" stroke-linejoin="round"/>
<path d="M624.1 292.4L635.1 302.8M624.1 302.8L635.1 292.4" stroke="#ffff00" stroke-width="2.3" fill="none"/>
<text class="ttl" x="540" y="254">Shallow3</text>
<text class="tk" text-anchor="end" x="562.2" y="388.1">20</text>
<text class="tk" text-anchor="end" x="562.2" y="373.1">25</text>
<text class="tk" text-anchor="end" x="562.2" y="358.1">30</text>
<text class="tk" text-anchor="end" x="562.2" y="344.1">35</text>
<text class="tk" text-anchor="end" x="562.2" y="329.1">40</text>
<text class="tk" text-anchor="end" x="562.2" y="314.1">45</text>
<text class="tk" text-anchor="end" x="562.2" y="300.1">50</text>
<text class="tk" text-anchor="end" x="562.2" y="285.1">55</text>
<text class="tk" text-anchor="end" x="562.2" y="270.1">60</text>
<text class="tk" text-anchor="middle" x="578.2" y="409.1">0</text>
<text class="tk" text-anchor="middle" x="643.2" y="409.1">50</text>
<text class="tk" text-anchor="middle" x="708.1" y="409.1">100</text>
<text class="tk" text-anchor="middle" x="773.1" y="409.1">150</text>
<text class="tk" text-anchor="middle" x="839.2" y="409.1">200</text>
<text class="tk" text-anchor="middle" x="904.2" y="409.1">250</text>
<text class="tk" text-anchor="middle" x="970.2" y="409.1">300</text>
<text class="tk" text-anchor="middle" x="1035.2" y="409.1">350</text>
<text class="tk" text-anchor="middle" x="807" y="422.9">Time (ns)</text>
<text class="tk" text-anchor="middle" transform="translate(546.1 325.5) rotate(-90)" style="letter-spacing:0.18px">Intensity (counts)</text>
</svg>
<svg class="panel-svg" style="left:7px;top:432px" width="521" height="201" viewBox="7 432 521 201">
<path d="M56.5 462V586M121.5 462V586M187.5 462V586M252.5 462V586M317.5 462V586M382.5 462V586M448.5 462V586M513.5 462V586" stroke="#fff" stroke-opacity="0.44" stroke-width="1" fill="none"/>
<path d="M56 585.5H521M56 568.5H521M56 551.5H521M56 534.5H521M56 518.5H521M56 501.5H521M56 484.5H521M56 467.5H521" stroke="#fff" stroke-opacity="0.44" stroke-width="1" fill="none"/>
<path d="M53.5 467V586M45 585.5H54M45 568.5H54M45 551.5H54M45 534.5H54M45 518.5H54M45 501.5H54M45 484.5H54M45 467.5H54M56 588.5H514M56.5 588V597M121.5 588V597M187.5 588V597M252.5 588V597M317.5 588V597M382.5 588V597M448.5 588V597M513.5 588V597" stroke="#fff" stroke-width="1" fill="none"/>
<path d="M56.5 582.1 L57.7 580.4 L59.1 575.4 L60.4 578.8 L64.1 578.8 L65.4 578.8 L66.6 582.1 L68 582.1 L69.3 578.8 L70.9 580.4 L72.3 582.1 L73.9 582.1 L75.2 579.8 L76.5 578.8 L77.8 582.1 L79.3 579.8 L80.4 578.8 L81.7 581.1 L83.1 584.2 L84.3 581.1 L85.6 578.8 L87.1 582.1 L88.6 581.1 L90.6 578.8 L92.5 581.1 L94.1 582.1 L95.5 581.1 L96.8 578.8 L99.5 578.1 L101 574.4 L102.5 569.3 L103.4 567.6 L104.8 571.3 L106 570 L107.3 562.2 L108.7 555.5 L109.9 550.4 L110.7 536.6 L111.5 521.1 L112.3 501.2 L113.4 494.5 L114.6 481.7 L115.8 470.2 L117.2 482.7 L117.7 479.6 L118.8 470.2 L119.7 483.7 L120.3 497.5 L121.1 497.2 L122 501.2 L123.2 509.3 L124.3 518.1 L125.2 533.9 L126.7 533.9 L127.9 524.8 L129.2 546.7 L130.1 528.2 L131.2 540.7 L132 548.8 L133.1 553.5 L134.3 548.8 L135.9 547.7 L137.5 545 L138.8 546.7 L139.9 553.5 L141 548.8 L141.8 554.5 L142.9 556.5 L144.1 564.3 L145.2 570.7 L146.7 568.6 L148.7 568.3 L150 565.3 L151.6 570.7 L153 568.3 L154.3 565.9 L156 570.3 L158 575.4 L158.9 561.6 L159.7 571.3 L161.3 572 L163.2 561.6 L164.5 569 L166.3 572.7 L168.3 577.7 L170.8 577.7 L172.6 570.3 L174.1 564.9 L175.1 570.7 L176.4 568.6 L177.7 573.4 L178.8 577.1 L180.5 572.7 L181.7 574.7 L183.3 572.4 L185.1 575.4 L187.6 577.7 L188.9 575.4 L190.7 577.7 L193.9 577.7 L195.8 575.4 L197.6 581.1 L199.3 578.4 L201.4 582.1 L203.5 578.4 L205.2 581.8 L206.8 575 L208.7 577.1 L210.6 575 L212.8 575 L214 581.1 L215.9 578.4 L218.4 577.7 L219.3 575.4 L220.9 582.1 L222.2 575.7 L223.6 578.4 L225.9 577.7 L227.8 575 L230.3 582.1 L232.1 578.4 L234.3 582.1 L236.2 575 L237.5 577.4 L240.3 574 L241.7 557.5 L243.1 545.7 L244.1 553.8 L245.3 560.9 L246.9 558.2 L247.9 565.3 L249.1 574.7 L251.6 571.3 L252.9 575.4 L254.4 580.8 L256 584.5 L257.3 578.4 L260.5 578.4 L261.2 584.5 L262.3 578.4 L264.5 578.4 L266.1 584.5 L267.6 578.4 L269.9 579.1 L271 584.5 L272.6 581.5 L274.2 575.4 L276.1 580.8 L277.6 579.1 L279.3 581.8 L283.6 582.1 L285.9 584.5 L288.7 580.1 L290.9 577.7 L293.1 582.5 L294.1 579.6 L296.8 579.7 L298.1 576.4 L299.4 581.1 L300.7 583.1 L302 582.8 L304.6 579.4 L305.9 583.4 L307.2 576.9 L308.5 580 L311.1 579.3 L312.4 579.9 L313.7 578.1 L316.3 580.4 L317.6 577.3 L320.3 578.6 L321.6 578.6 L322.9 575.6 L324.2 580.1 L325.5 578.8 L326.8 583.7 L329.4 581.1 L330.7 584.1 L333.3 576.3 L334.6 575.9 L335.9 581.1 L337.2 576.9 L339.8 580.4 L342.5 576.6 L345.1 581.1 L347.7 576.9 L350.3 576.8 L351.6 583.4 L352.9 580.2 L354.2 579.8 L355.5 580.8 L356.8 578.7 L358.1 575.9 L360.7 575.5 L363.3 580 L364.6 582.9 L366 580.6 L368.6 580.5 L369.9 581.2 L371.2 578.6 L372.5 575.6 L373.8 583.8 L375.1 583.9 L376.4 581 L377.7 578.1 L379 579.5 L380.3 584.1 L382.9 578.2 L384.2 579.8 L386.8 575.4 L388.2 579 L390.8 579.1 L393.4 580.3 L394.7 578.5 L396 578.5 L397.3 580.2 L398.6 581.2 L399.9 578.5 L402.5 579 L403.8 578.6 L405.1 581.4 L406.4 580.7 L407.7 579.4 L410.3 577.4 L411.7 580.8 L413 579.2 L414.3 580.4 L415.6 576.5 L418.2 578.5 L419.5 580.4 L420.8 578.6 L423.4 578.3 L424.7 576.5 L426 576.6 L427.3 580.4 L429.9 579.9 L431.2 583 L432.5 579.5 L433.9 581.4 L435.2 581.4 L437.8 577.1 L439.1 579.9 L440.4 578.7 L443 580.8 L444.3 577.4 L445.6 580.9 L446.9 576 L448.2 578.9 L449.5 578.4 L450.8 579 L452.1 579.3 L454.7 579.5 L457.4 578.3 L458.7 580.8 L461.3 579.3 L463.9 575.6 L466.5 579.6 L469.1 583.5 L470.4 578.8 L471.7 578.1 L473 574.7" stroke="#0000e6" stroke-width="1.3" fill="none" stroke-linejoin="round"/>
<path d="M105.6 517.4L116.6 527.8M105.6 527.8L116.6 517.4" stroke="#ffff00" stroke-width="2.3" fill="none"/>
<text class="ttl" x="18.3" y="455">Shallow4</text>
<text class="tk" text-anchor="end" x="40.2" y="589.1">25</text>
<text class="tk" text-anchor="end" x="40.2" y="572.1">30</text>
<text class="tk" text-anchor="end" x="40.2" y="555.1">35</text>
<text class="tk" text-anchor="end" x="40.2" y="538.1">40</text>
<text class="tk" text-anchor="end" x="40.2" y="522.1">45</text>
<text class="tk" text-anchor="end" x="40.2" y="505.1">50</text>
<text class="tk" text-anchor="end" x="40.2" y="488.1">55</text>
<text class="tk" text-anchor="end" x="40.2" y="471.1">60</text>
<text class="tk" text-anchor="middle" x="56.2" y="610.1">0</text>
<text class="tk" text-anchor="middle" x="121.2" y="610.1">50</text>
<text class="tk" text-anchor="middle" x="186.1" y="610.1">100</text>
<text class="tk" text-anchor="middle" x="251.1" y="610.1">150</text>
<text class="tk" text-anchor="middle" x="317.2" y="610.1">200</text>
<text class="tk" text-anchor="middle" x="382.2" y="610.1">250</text>
<text class="tk" text-anchor="middle" x="448.2" y="610.1">300</text>
<text class="tk" text-anchor="middle" x="513.2" y="610.1">350</text>
<text class="tk" text-anchor="middle" x="285" y="623.9">Time (ns)</text>
<text class="tk" text-anchor="middle" transform="translate(23.6 526.5) rotate(-90)" style="letter-spacing:0.18px">Intensity (counts)</text>
</svg>
<svg class="panel-svg" style="left:528px;top:432px" width="522" height="201" viewBox="528 432 522 201">
<path d="M578.5 462V586M643.5 462V586M709.5 462V586M774.5 462V586M839.5 462V586M904.5 462V586M970.5 462V586M1035.5 462V586" stroke="#fff" stroke-opacity="0.44" stroke-width="1" fill="none"/>
<path d="M578 585.5H1043M578 561.5H1043M578 538.5H1043M578 514.5H1043M578 491.5H1043M578 467.5H1043" stroke="#fff" stroke-opacity="0.44" stroke-width="1" fill="none"/>
<path d="M575.5 467V586M567 585.5H576M567 561.5H576M567 538.5H576M567 514.5H576M567 491.5H576M567 467.5H576M578 588.5H1036M578.5 588V597M643.5 588V597M709.5 588V597M774.5 588V597M839.5 588V597M904.5 588V597M970.5 588V597M1035.5 588V597" stroke="#fff" stroke-width="1" fill="none"/>
<path d="M578.5 569.5 L580.1 570.4 L586.1 570.9 L588 573.2 L589.6 572.3 L590.9 570.9 L592.5 570.9 L594.3 572.8 L595.9 570.4 L597.8 568.3 L599.3 572.3 L601.2 570.9 L603.7 570.9 L605.7 569.5 L607.1 568 L608.3 570.9 L609.6 568.3 L611.3 565.4 L612.6 569.9 L614.5 569.5 L616.1 571.3 L617.1 573.2 L618.5 570.9 L620 568.3 L621.5 571.3 L622.4 572.3 L623.8 569.9 L624.5 556.5 L625.4 544.7 L626.4 540.4 L627.7 541.8 L628.9 536.9 L630.3 527 L631.1 509.3 L631.9 488.5 L632.8 485.7 L634 481.2 L635.2 498.4 L636.2 481.7 L637.4 469.4 L638.2 479.5 L639.2 496.3 L640.8 494.4 L641.7 507.1 L642.5 520.1 L643.3 509.3 L644.4 515.2 L645.6 514.7 L647 523 L648.4 517.1 L649.1 518 L650.2 543.7 L651 539.7 L652.1 549.6 L653.6 544.7 L654.9 540.7 L656.3 539.7 L657.9 543.7 L659.8 549.6 L661.8 551.5 L663.1 554.6 L664.2 564.5 L664.9 554.6 L666.1 558.6 L667.7 558.1 L669.2 559.5 L671.1 565.4 L672.6 557.4 L673.6 562.4 L674.6 565.4 L675.8 557.4 L677 563.6 L678.1 557.4 L679.6 562.4 L680.9 557.7 L682.7 562.1 L684.5 562.1 L685.8 565.2 L687.7 564.5 L689.6 567.1 L691.4 565 L693.4 565.9 L695.9 564 L697.7 568.3 L699.7 567.8 L700.8 562.1 L701.8 565.2 L703.1 558.8 L704.6 562.1 L706.5 565.2 L708 567.8 L709.6 572.5 L710.9 568.3 L717.2 568 L718.5 568.3 L720 572.5 L722 567.8 L723.7 565.9 L725.4 569.7 L727 564.5 L727.9 567.8 L729 566.4 L731 568 L734.8 568 L736 572.5 L737.3 568.7 L739.8 571.1 L747.9 571.1 L749.2 567.1 L750.2 570.9 L751.6 568.3 L753.2 570.2 L754.8 567.1 L756.1 566.4 L758.2 571.6 L760.5 569 L762.3 567.1 L763 557.7 L764.4 551.3 L766.1 544.4 L767.3 549.4 L769 555.1 L770.2 560.7 L771.7 563.3 L774 571.6 L775.3 564.5 L777.4 567.1 L779.8 568.3 L781.8 571.6 L783 575.4 L784 569 L785.6 572.8 L786.5 571.6 L788.1 575.4 L789.9 572.8 L792.4 571.6 L795 568.3 L796.8 572.5 L798.6 571.6 L801.3 572.8 L805.6 570.9 L808 572.5 L810 571.1 L812.4 570.9 L814.4 575.4 L816.1 569.5 L817.4 567.6 L818.8 569.5 L820.1 569.5 L821.4 569.5 L822.7 571.3 L824 573 L825.3 573 L826.6 573 L827.9 571.3 L829.2 571.3 L830.5 571.3 L831.8 571.3 L833.1 569.5 L834.4 569.5 L835.7 573 L837 573 L838.3 573 L839.6 573 L840.9 573 L842.3 569.5 L843.6 569.5 L844.9 571.3 L846.2 573 L847.5 571.3 L848.8 569.5 L850.1 569.5 L851.4 569.5 L852.7 569.5 L854 569.5 L855.3 569.5 L856.6 569.5 L857.9 575.1 L859.2 571.3 L860.5 571.3 L861.8 571.3 L863.1 571.3 L864.5 571.3 L865.8 573 L867.1 575.1 L868.4 569.5 L869.7 569.5 L871 571.3 L872.3 575.1 L873.6 575.1 L874.9 575.1 L876.2 573 L877.5 569.5 L878.8 571.3 L880.1 571.3 L881.4 569.5 L882.7 569.5 L884 569.5 L885.3 575.1 L886.6 573 L888 573 L889.3 569.5 L890.6 569.5 L891.9 571.3 L893.2 571.3 L894.5 571.3 L895.8 571.3 L897.1 571.3 L898.4 571.3 L899.7 567.6 L901 567.6 L902.3 567.6 L903.6 571.3 L904.9 571.3 L906.2 571.3 L907.5 569.5 L908.8 569.5 L910.2 569.5 L911.5 569.5 L912.8 575.1 L914.1 575.1 L915.4 573 L916.7 567.6 L918 569.5 L919.3 569.5 L920.6 569.5 L921.9 569.5 L923.2 573 L924.5 573 L925.8 569.5 L927.1 571.3 L928.4 571.3 L929.7 571.3 L931 571.3 L932.3 571.3 L933.7 571.3 L935 571.3 L936.3 567.6 L937.6 571.3 L938.9 571.3 L940.2 571.3 L941.5 571.3 L942.8 569.5 L944.1 569.5 L945.4 569.5 L946.7 571.3 L948 571.3 L949.3 573 L950.6 573 L951.9 571.3 L953.2 571.3 L954.5 571.3 L955.9 575.1 L957.2 573 L958.5 571.3 L959.8 571.3 L961.1 571.3 L962.4 569.5 L963.7 571.3 L965 569.5 L966.3 567.6 L967.6 571.3 L968.9 573 L970.2 567.6 L971.5 567.6 L972.8 569.5 L974.1 573 L975.4 571.3 L976.7 571.3 L978 569.5 L979.4 569.5 L980.7 569.5 L982 569.5 L983.3 569.5 L984.6 573 L985.9 572.5 L987.2 571.3 L988.5 574.6 L989.8 569.5 L991.1 573.2 L992.4 567.6 L993.7 570.9 L995 565.9" stroke="#008080" stroke-width="1.3" fill="none" stroke-linejoin="round"/>
<path d="M625.6 504L636.6 514.4M625.6 514.4L636.6 504" stroke="#ffff00" stroke-width="2.3" fill="none"/>
<text class="ttl" x="540" y="455">Shallow5</text>
<text class="tk" text-anchor="end" x="562.2" y="589.1">20</text>
<text class="tk" text-anchor="end" x="562.2" y="565.1">30</text>
<text class="tk" text-anchor="end" x="562.2" y="542.1">40</text>
<text class="tk" text-anchor="end" x="562.2" y="518.1">50</text>
<text class="tk" text-anchor="end" x="562.2" y="495.1">60</text>
<text class="tk" text-anchor="end" x="562.2" y="471.1">70</text>
<text class="tk" text-anchor="middle" x="578.2" y="610.1">0</text>
<text class="tk" text-anchor="middle" x="643.2" y="610.1">50</text>
<text class="tk" text-anchor="middle" x="708.1" y="610.1">100</text>
<text class="tk" text-anchor="middle" x="773.1" y="610.1">150</text>
<text class="tk" text-anchor="middle" x="839.2" y="610.1">200</text>
<text class="tk" text-anchor="middle" x="904.2" y="610.1">250</text>
<text class="tk" text-anchor="middle" x="970.2" y="610.1">300</text>
<text class="tk" text-anchor="middle" x="1035.2" y="610.1">350</text>
<text class="tk" text-anchor="middle" x="807" y="623.9">Time (ns)</text>
<text class="tk" text-anchor="middle" transform="translate(546.1 526.5) rotate(-90)" style="letter-spacing:0.18px">Intensity (counts)</text>
</svg>
</body></html>
